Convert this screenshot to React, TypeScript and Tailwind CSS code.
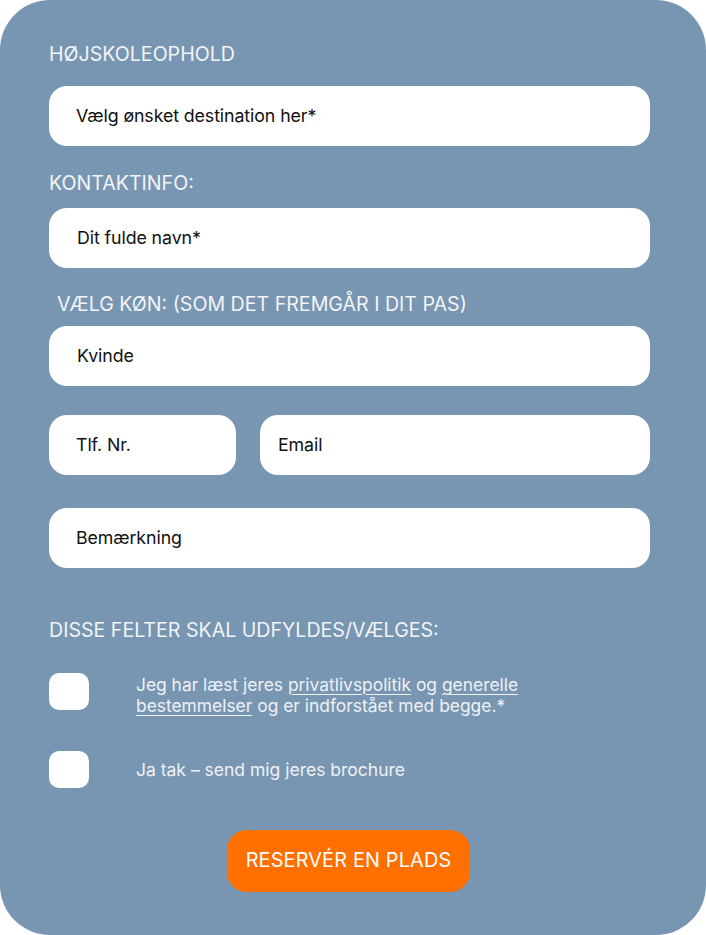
export default function App() {
  const field =
    "h-[60px] rounded-[18px] bg-white flex items-center text-[17.8px] text-[#111] tracking-[-0.1px]";
  const heading = "text-[19.6px] leading-[24px] text-[#f2f4f7]";

  return (
    <div className="w-[706px] h-[935px] bg-white" style={{ fontFamily: "Inter, 'Noto Sans', sans-serif" }}>
      <div className="h-full rounded-[50px] bg-[#7896b2] pt-[42px] pl-[49px] pr-[56px]">
        <div className={heading}>HØJSKOLEOPHOLD</div>
        <div className={`${field} mt-[20px] pl-[27px]`}>Vælg ønsket destination her*</div>

        <div className={`${heading} mt-[25px]`}>KONTAKTINFO:</div>
        <div className={`${field} mt-[13px] pl-[28px]`}>Dit fulde navn*</div>

        <div className={`${heading} mt-[24px] pl-[8px]`}>VÆLG KØN: (SOM DET FREMGÅR I DIT PAS)</div>
        <div className={`${field} mt-[10px] pl-[28px]`}>Kvinde</div>

        <div className="mt-[29px] flex gap-[24px]">
          <div className={`${field} w-[187px] pl-[27px]`}>Tlf. Nr.</div>
          <div className={`${field} flex-1 pl-[18px] items-start pt-[17px]`}>Email</div>
        </div>

        <div className={`${field} mt-[33px] pl-[27px]`}>Bemærkning</div>

        <div className={`${heading} mt-[50px]`}>DISSE FELTER SKAL UDFYLDES/VÆLGES:</div>

        <div className="mt-[31px] flex">
          <div className="w-[40px] h-[37px] rounded-[10px] bg-white shrink-0" />
          <p className="ml-[47px] mt-[1px] text-[17.4px] leading-[21px] text-[#eef1f5]">
            Jeg har læst jeres{" "}
            <span className="underline underline-offset-[3px] decoration-1">privatlivspolitik</span> og{" "}
            <span className="underline underline-offset-[3px] decoration-1">generelle</span>
            <br />
            <span className="underline underline-offset-[3px] decoration-1">bestemmelser</span> og er indforstået med
            begge.*
          </p>
        </div>

        <div className="mt-[35px] flex items-center">
          <div className="w-[40px] h-[37px] rounded-[10px] bg-white shrink-0" />
          <p className="ml-[47px] text-[17.5px] leading-[21px] text-[#eef1f5]">Ja tak – send mig jeres brochure</p>
        </div>

        <div className="mt-[42px] flex justify-center pr-[2px]">
          <button className="w-[243px] h-[62px] rounded-[20px] bg-[#ff7000] text-white text-[19.8px] tracking-[0.2px]">
            RESERVÉR EN PLADS
          </button>
        </div>
      </div>
    </div>
  );
}
